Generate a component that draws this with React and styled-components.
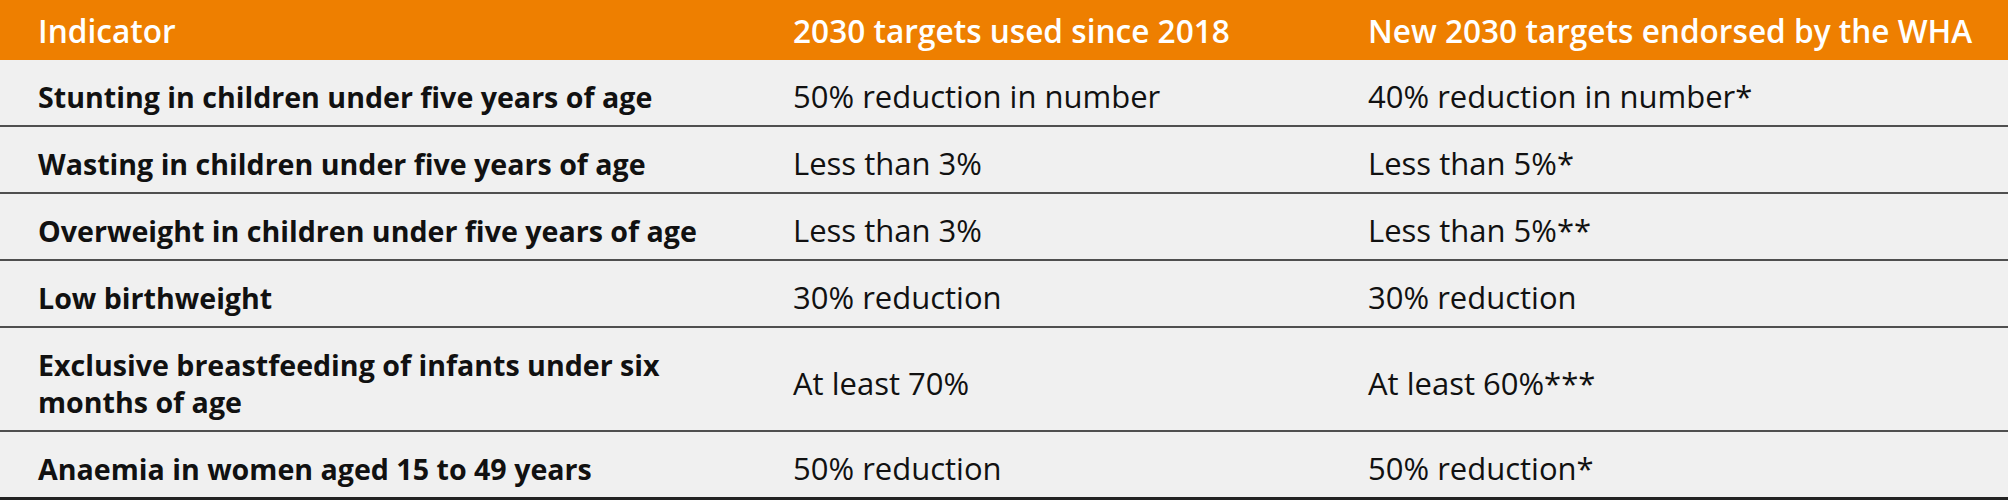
import React from "react";
import styled, { createGlobalStyle } from "styled-components";

const rows = [
  ["Stunting in children under five years of age", "50% reduction in number", "40% reduction in number*"],
  ["Wasting in children under five years of age", "Less than 3%", "Less than 5%*"],
  ["Overweight in children under five years of age", "Less than 3%", "Less than 5%**"],
  ["Low birthweight", "30% reduction", "30% reduction"],
  ["Exclusive breastfeeding of infants under six months of age", "At least 70%", "At least 60%***"],
  ["Anaemia in women aged 15 to 49 years", "50% reduction", "50% reduction*"],
];

const App = () => (
  <>
    <GlobalStyle />
    <Table>
      <HeadRow>
        <HeadCell>Indicator</HeadCell>
        <HeadCell>2030 targets used since 2018</HeadCell>
        <HeadCell>New 2030 targets endorsed by the WHA</HeadCell>
      </HeadRow>
      {rows.map(([indicator, old, updated], i) => (
        <Row key={indicator} $last={i === rows.length - 1}>
          <Cell $bold>{indicator}</Cell>
          <Cell>{old}</Cell>
          <Cell>{updated}</Cell>
        </Row>
      ))}
    </Table>
  </>
);

const GlobalStyle = createGlobalStyle`
  body {
    margin: 0;
    background: #ffffff;
  }
`;

const Table = styled.div`
  width: 2008px;
  font-family: "Open Sans", "Liberation Sans", sans-serif;
  line-height: 37px;
`;

const HeadRow = styled.div`
  display: grid;
  grid-template-columns: 755px 575px 1fr;
  height: 60px;
  align-items: center;
  background: #ee7f00;
`;

const HeadCell = styled.div`
  padding-left: 38px;
  color: #ffffff;
  font-weight: 600;
  font-size: 31.6px;
`;

const Row = styled.div`
  display: grid;
  grid-template-columns: 755px 575px 1fr;
  align-items: center;
  background: #f0f0f0;
  border-bottom: ${({ $last }) => ($last ? "3px solid #222222" : "2px solid #4f4f4f")};
`;

const Cell = styled.div`
  padding: 18px 20px 10px 38px;
  color: #111111;
  font-size: ${({ $bold }) => ($bold ? "28.6px" : "31px")};
  font-weight: ${({ $bold }) => ($bold ? 700 : 400)};
`;

export default App;
